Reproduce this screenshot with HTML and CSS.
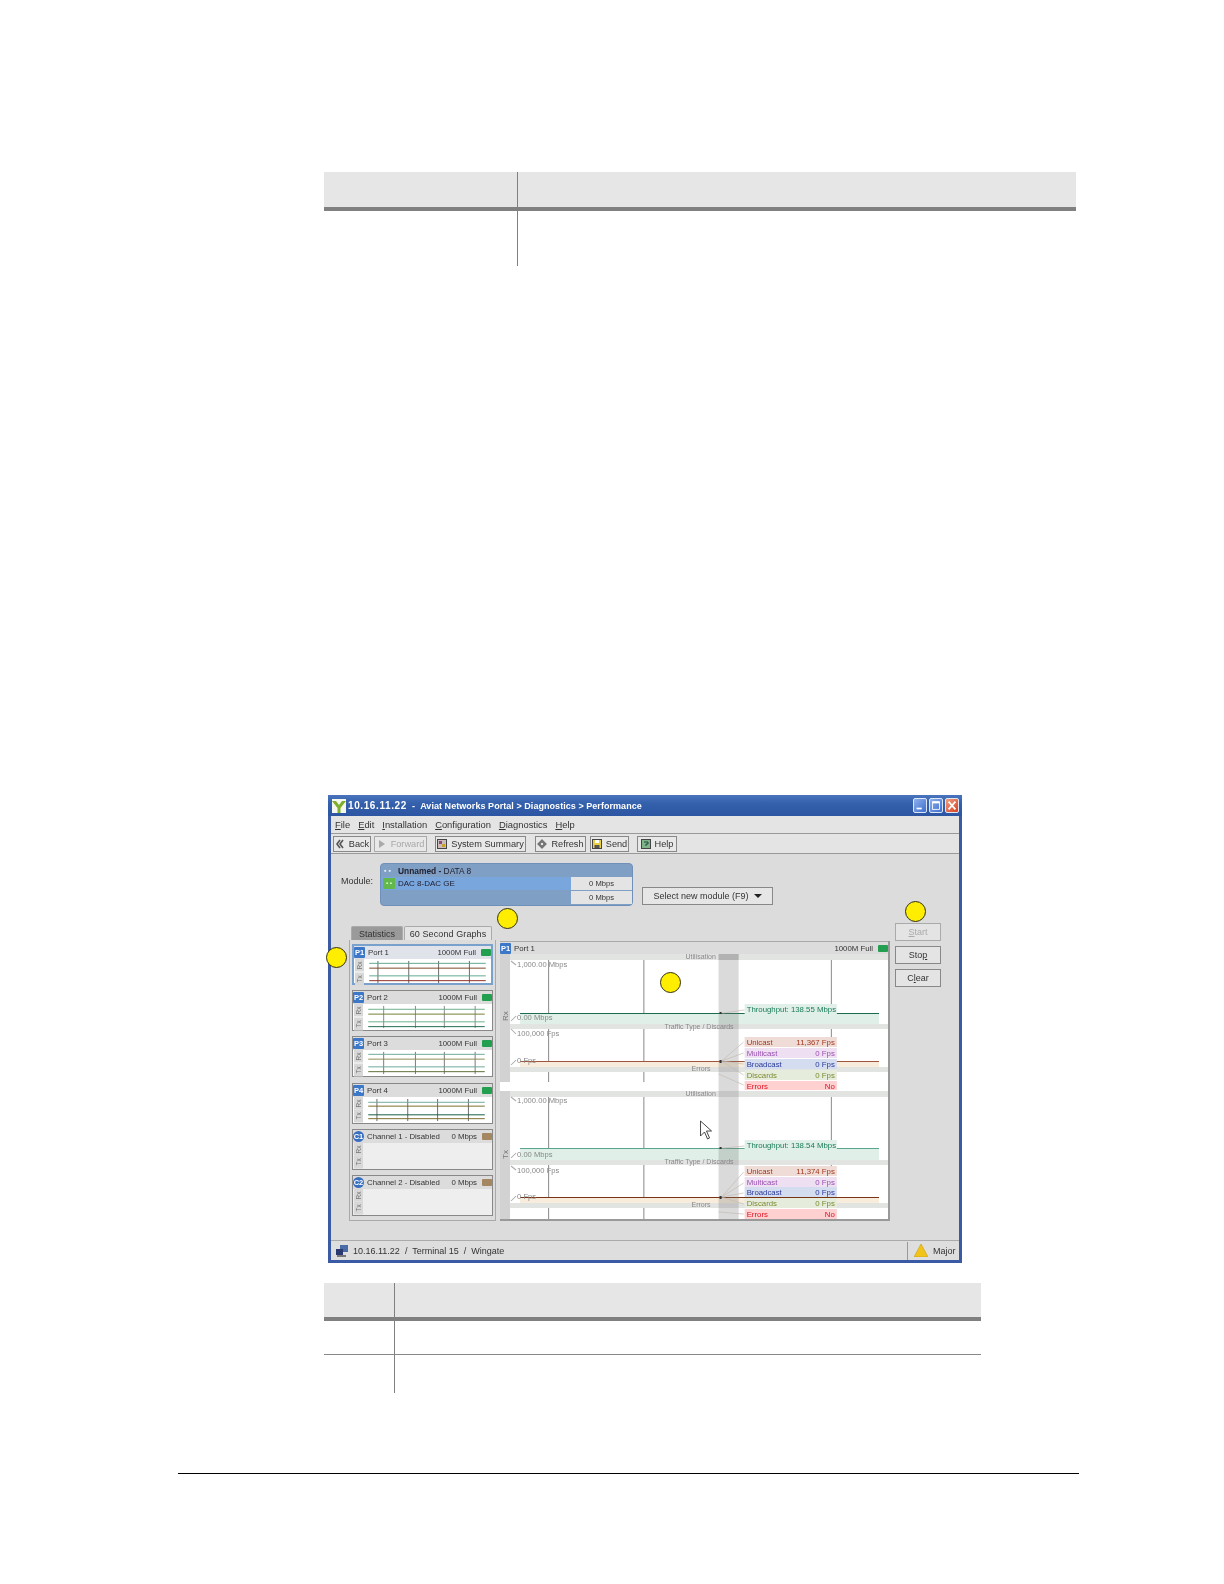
FILE: index.html
```html
<!DOCTYPE html>
<html lang="en">
<head>
<meta charset="utf-8">
<title>Performance</title>
<link rel="stylesheet" href="styles.css">
</head>
<body>
<main class="page">
  <table class="doc-table top-table">
    <thead><tr><th class="c1"></th><th></th></tr></thead>
    <tbody><tr class="r57"><td></td><td></td></tr></tbody>
  </table>

  <div class="shot">
    <div class="window">
      <header class="titlebar">
        <svg class="app-icon" viewBox="0 0 14 14"><rect width="14" height="14" fill="#f4f8ee"/><path d="M0 2 L4 2 L7 6 L10 2 L14 2 L8.5 9 L8.5 14 L5.500 14 L5.500 9 Z" fill="#7fb02c"/></svg>
        <span class="title-text"><span class="ip">10.16.11.22</span>&nbsp; - &nbsp;Aviat Networks Portal &gt; Diagnostics &gt; Performance</span>
        <span class="win-btns">
          <span class="wb"><svg viewBox="0 0 14 15"><rect x="3" y="10" width="6" height="2" fill="#fff"/></svg></span>
          <span class="wb"><svg viewBox="0 0 14 15"><rect x="3" y="3" width="8" height="9" fill="none" stroke="#fff" stroke-width="1"/><rect x="3" y="3" width="8" height="2" fill="#fff"/></svg></span>
          <span class="wb close"><svg viewBox="0 0 14 15"><path d="M3 3 L11 12 M11 3 L3 12" stroke="#fff" stroke-width="2"/></svg></span>
        </span>
      </header>
      <nav class="menubar">
        <span><u>F</u>ile</span><span><u>E</u>dit</span><span><u>I</u>nstallation</span><span><u>C</u>onfiguration</span><span><u>D</u>iagnostics</span><span><u>H</u>elp</span>
      </nav>
      <div class="toolbar">
        <span class="tb w-back"><svg class="ti" viewBox="0 0 10 10"><path d="M5 1 L2 5 L5 9 M8 1 L5 5 L8 9" fill="none" stroke="#555" stroke-width="1.6"/></svg>Back</span>
        <span class="tb w-fwd off"><svg class="ti" viewBox="0 0 10 10"><path d="M2 1 L8 5 L2 9 Z" fill="#aaa"/></svg>Forward</span>
        <span class="tb w-sys"><svg class="ti" viewBox="0 0 10 10"><rect x=".5" y=".5" width="9" height="9" fill="#cbb" stroke="#444"/><rect x="2" y="2" width="3" height="3" fill="#8a4a7a"/><rect x="5" y="5" width="3" height="3" fill="#c9a030"/></svg>System Summary</span>
        <span class="tb w-ref"><svg class="ti" viewBox="0 0 10 10"><path d="M5 .5 L9.500 5 L5 9.500 L.5 5 Z M5 3 L7 5 L5 7 L3 5 Z" fill="#777" fill-rule="evenodd" stroke="#444" stroke-width=".5"/></svg>Refresh</span>
        <span class="tb w-send"><svg class="ti" viewBox="0 0 10 10"><rect x=".5" y=".5" width="9" height="9" fill="#e8d040" stroke="#444"/><rect x="3" y="1" width="4" height="3" fill="#fff"/><rect x="2.500" y="6" width="5" height="3" fill="#555"/></svg>Send</span>
        <span class="tb w-help"><svg class="ti" viewBox="0 0 10 10"><rect x=".5" y=".5" width="9" height="9" fill="#7fb488" stroke="#444"/><path d="M3 3 L7 3 L7 5 L5 5 L5 7" fill="none" stroke="#244" stroke-width="1"/></svg>Help</span>
      </div>

      <section class="content">
        <div class="module-row">
          <span class="module-label">Module:</span>
          <div class="module-panel">
            <div class="module-head"><span class="dots">▪ ▪</span><b>Unnamed -</b>&nbsp;DATA 8</div>
            <div class="module-grid">
              <div class="module-sel"><span class="green-chip">▪ ▪</span>DAC 8-DAC GE</div>
              <div class="module-vals"><span>0 Mbps</span><span>0 Mbps</span></div>
            </div>
          </div>
          <span class="select-btn">Select new module (F9)<i class="caret"></i></span>
        </div>

        <div class="workspace">
          <div class="left-col">
            <div class="tabs"><span class="tab dark">Statistics</span><span class="tab">60 Second Graphs</span></div>
            <div class="port-panel">
              <article class="card sel">
                <div class="card-head"><span class="badge">P1</span><span class="name">Port 1</span><span class="speed">1000M Full</span><i class="led"></i></div>
                <div class="card-body"><div class="rxtx"><span>Rx</span><span>Tx</span></div>
                  <svg class="mini" viewBox="0 0 122 27"><path d="M9 2V25M41 2V25M72 2V25M104 2V25" stroke="#666"/><path d="M0 4.500H121M0 17.500H121" stroke="#5da58e"/><path d="M0 9.500H121" stroke="#7a4420"/><path d="M0 22.500H121" stroke="#902a20"/></svg></div>
              </article>
              <article class="card">
                <div class="card-head"><span class="badge">P2</span><span class="name">Port 2</span><span class="speed">1000M Full</span><i class="led"></i></div>
                <div class="card-body"><div class="rxtx"><span>Rx</span><span>Tx</span></div>
                  <svg class="mini" viewBox="0 0 122 27"><path d="M16 2V25M49 2V25M79 2V25M111 2V25" stroke="#888"/><path d="M0 5.500H121M0 18.500H121" stroke="#6ab08a"/><path d="M0 10.500H121" stroke="#6f7a30"/><path d="M0 23.500H121" stroke="#1d6a4a"/></svg></div>
              </article>
              <article class="card">
                <div class="card-head"><span class="badge">P3</span><span class="name">Port 3</span><span class="speed">1000M Full</span><i class="led"></i></div>
                <div class="card-body"><div class="rxtx"><span>Rx</span><span>Tx</span></div>
                  <svg class="mini" viewBox="0 0 122 27"><path d="M16 2V25M49 2V25M79 2V25M111 2V25" stroke="#777"/><path d="M0 4.500H121M0 17.500H121" stroke="#6aa898"/><path d="M0 9.500H121" stroke="#8a8a50"/><path d="M0 22.500H121" stroke="#5a6a30"/></svg></div>
              </article>
              <article class="card">
                <div class="card-head"><span class="badge">P4</span><span class="name">Port 4</span><span class="speed">1000M Full</span><i class="led"></i></div>
                <div class="card-body"><div class="rxtx"><span>Rx</span><span>Tx</span></div>
                  <svg class="mini" viewBox="0 0 122 27"><path d="M9 2V25M41 2V25M72 2V25M104 2V25" stroke="#666"/><path d="M0 5.500H121" stroke="#6aa898"/><path d="M0 9.500H121" stroke="#7a6a28"/><path d="M0 18.500H121" stroke="#0f5a3a"/><path d="M0 22.500H121" stroke="#7a6a28"/></svg></div>
              </article>
              <article class="card idle">
                <div class="card-head"><span class="badge round">C1</span><span class="name">Channel 1 - Disabled</span><span class="speed">0 Mbps</span><i class="led brown"></i></div>
                <div class="card-body"><div class="rxtx"><span>Rx</span><span>Tx</span></div></div>
              </article>
              <article class="card idle">
                <div class="card-head"><span class="badge round">C2</span><span class="name">Channel 2 - Disabled</span><span class="speed">0 Mbps</span><i class="led brown"></i></div>
                <div class="card-body"><div class="rxtx"><span>Rx</span><span>Tx</span></div></div>
              </article>
            </div>
          </div>

          <div class="graph-panel">
            <div class="graph-head"><span class="badge">P1</span><span class="name">Port 1</span><span class="speed">1000M Full</span><i class="led"></i></div>
            <svg class="plot" viewBox="0 0 387 265" preserveAspectRatio="none">
              <rect width="387" height="265" fill="#fff"/>
              <rect y="0" width="10" height="128" fill="#d2d2d2"/>
              <rect y="137" width="10" height="128" fill="#d2d2d2"/>
              <g fill="#e2e4e2">
                <rect x="10" y="0" width="377" height="6"/><rect x="10" y="70" width="377" height="5"/><rect x="10" y="113" width="377" height="5"/>
                <rect x="10" y="137" width="377" height="6"/><rect x="10" y="206" width="377" height="5"/><rect x="10" y="249" width="377" height="5"/>
              </g>
              <g stroke="#8a8a8a" stroke-width="1">
                <path d="M48.500 6V70M143.500 6V70M330.500 6V50M48.500 75V113M143.500 75V113M330.500 75V84M48.500 118V128M143.500 118V128"/>
                <path d="M48.500 143V206M143.500 143V206M330.500 143V190M48.500 211V249M143.500 211V249M330.500 211V213M48.500 254V265M143.500 254V265"/>
              </g>
              <rect x="20" y="59" width="358" height="11" fill="#e0f0e8"/>
              <path d="M20 59.500H378" stroke="#1b6b4c"/>
              <rect x="20" y="194" width="358" height="12" fill="#e0f0e8"/>
              <path d="M20 194.500H378" stroke="#5aa58e"/>
              <rect x="20" y="108" width="358" height="5" fill="#f8ecdc"/>
              <path d="M20 107.500H378" stroke="#a0563a"/>
              <rect x="20" y="244" width="358" height="5" fill="#f8ecdc"/>
              <path d="M20 243.500H378" stroke="#7a3310"/>
              <rect x="218" y="0" width="20" height="265" fill="#777" opacity=".27"/>
              <rect x="218" y="0" width="20" height="6" fill="#777" opacity=".25"/>

              <g fill="none" stroke="#c4bcb4" stroke-width=".7">
                <path d="M222 59L244 56M222 194L244 192"/>
                <path d="M221 107L243 88M221 107L243 99M221 107L243 110M221 107L243 121M218 120L243 131"/>
                <path d="M221 243L243 218M221 243L243 229M221 243L243 239M221 243L243 250M218 258L243 260"/>
              </g>
              <g fill="#333"><rect x="219" y="58" width="2" height="2"/><rect x="219" y="193" width="2" height="2"/><rect x="219" y="106" width="2" height="3"/><rect x="219" y="242" width="2" height="3"/></g>

              <g class="axis">
                <text x="185" y="5" class="band">Utilisation</text>
                <text x="164" y="75" class="band">Traffic Type / Discards</text>
                <text x="191" y="117.500" class="band">Errors</text>
                <text x="185" y="142" class="band">Utilisation</text>
                <text x="164" y="210.500" class="band">Traffic Type / Discards</text>
                <text x="191" y="253.500" class="band">Errors</text>
                <path d="M11 7L16 11M11 75L16 80M11 67L16 62M11 111L16 106M11 143L16 147M11 212L16 216M11 204L16 199M11 247L16 242" stroke="#aaa" fill="none"/>
                <text x="17" y="13">1,000.00 Mbps</text>
                <text x="17" y="66">0.00 Mbps</text>
                <text x="17" y="82">100,000 Fps</text>
                <text x="17" y="109">0 Fps</text>
                <text x="17" y="149">1,000.00 Mbps</text>
                <text x="17" y="203">0.00 Mbps</text>
                <text x="17" y="219">100,000 Fps</text>
                <text x="17" y="245">0 Fps</text>
              </g>
              <text class="vert" transform="translate(8 67) rotate(-90)">Rx</text>
              <text class="vert" transform="translate(8 205) rotate(-90)">Tx</text>

              <g class="legend">
                <rect x="244" y="50" width="92" height="10" fill="#e0f0e8"/><text x="246" y="58" fill="#1a7a5a">Throughput: 138.55 Mbps</text>
                <rect x="244" y="83" width="92" height="10" fill="#f0dcd6"/><text x="246" y="91" fill="#a03a20">Unicast</text><text x="334" y="91" class="r" fill="#a03a20">11,367 Fps</text>
                <rect x="244" y="94" width="92" height="10" fill="#eee0f2"/><text x="246" y="102" fill="#9a50b0">Multicast</text><text x="334" y="102" class="r" fill="#9a50b0">0 Fps</text>
                <rect x="244" y="105" width="92" height="10" fill="#d4dcf0"/><text x="246" y="113" fill="#2a3a9a">Broadcast</text><text x="334" y="113" class="r" fill="#2a3a9a">0 Fps</text>
                <rect x="244" y="116" width="92" height="10" fill="#e6ecdc"/><text x="246" y="124" fill="#7a8a30">Discards</text><text x="334" y="124" class="r" fill="#7a8a30">0 Fps</text>
                <rect x="244" y="127" width="92" height="9" fill="#ffd0d0"/><text x="246" y="135" fill="#e01020">Errors</text><text x="334" y="135" class="r" fill="#e01020">No</text>

                <rect x="244" y="186" width="92" height="10" fill="#e0f0e8"/><text x="246" y="194" fill="#1a7a5a">Throughput: 138.54 Mbps</text>
                <rect x="244" y="212" width="92" height="10" fill="#f0dcd6"/><text x="246" y="220" fill="#a03a20">Unicast</text><text x="334" y="220" class="r" fill="#a03a20">11,374 Fps</text>
                <rect x="244" y="223" width="92" height="10" fill="#eee0f2"/><text x="246" y="231" fill="#9a50b0">Multicast</text><text x="334" y="231" class="r" fill="#9a50b0">0 Fps</text>
                <rect x="244" y="233" width="92" height="10" fill="#d4dcf0"/><text x="246" y="241" fill="#2a3a9a">Broadcast</text><text x="334" y="241" class="r" fill="#2a3a9a">0 Fps</text>
                <rect x="244" y="244" width="92" height="10" fill="#e6ecdc"/><text x="246" y="252" fill="#7a8a30">Discards</text><text x="334" y="252" class="r" fill="#7a8a30">0 Fps</text>
                <rect x="244" y="255" width="92" height="10" fill="#ffd0d0"/><text x="246" y="263" fill="#e01020">Errors</text><text x="334" y="263" class="r" fill="#e01020">No</text>
              </g>
              <path d="M200 167 L200 182 L204 178 L207 185 L209 184 L206 177 L211 177 Z" fill="#fff" stroke="#333" stroke-width=".9"/>
            </svg>
          </div>

          <div class="actions">
            <span class="act off"><u>S</u>tart</span>
            <span class="act">Sto<u>p</u></span>
            <span class="act">C<u>l</u>ear</span>
          </div>
        </div>
      </section>

      <footer class="statusbar">
        <svg class="net" viewBox="0 0 12 12"><rect x="4" y="0" width="8" height="7" fill="#4a6aa8"/><rect x="0" y="4" width="7" height="6" fill="#2a3a70"/><rect x="1" y="10" width="9" height="2" fill="#777"/></svg>
        <span class="status-text">10.16.11.22 &nbsp;/&nbsp; Terminal 15 &nbsp;/&nbsp; Wingate</span>
        <span class="alarm"><svg class="tri" viewBox="0 0 14 13"><path d="M7 0 L14 13 L0 13 Z" fill="#f2c418" stroke="#c89a10" stroke-width=".6"/></svg>Major</span>
      </footer>
    </div>
    <i class="callout c-a"></i>
    <i class="callout c-b"></i>
    <i class="callout c-c"></i>
    <i class="callout c-d"></i>
  </div>

  <table class="doc-table bottom-table">
    <thead><tr><th class="c1"></th><th></th></tr></thead>
    <tbody><tr class="r35 ruled"><td></td><td></td></tr><tr class="r39"><td></td><td></td></tr></tbody>
  </table>

  <hr class="foot-rule">
</main>
</body>
</html>
```

FILE: styles.css
```css
* { box-sizing: border-box; }
html, body { margin: 0; padding: 0; background: #fff; }
body { font-family: "Liberation Sans", Arial, sans-serif; color: #333; }
.page { padding-top: 172px; width: 1224px; height: 1584px; overflow: hidden; }

.doc-table { border-collapse: collapse; table-layout: fixed; margin-left: 324px; }
.doc-table th { height: 37px; background: #e6e6e6; border-bottom: 4px solid #808080; padding: 0; }
.doc-table th + th, .doc-table td + td { border-left: 1px solid #808080; }
.doc-table td { padding: 0; }
.top-table { width: 752px; }
.top-table .c1 { width: 193px; }
.r57 td { height: 57px; }
.bottom-table { width: 657px; margin-top: 20px; }
.bottom-table th { height: 36px; }
.bottom-table .c1 { width: 70px; }
.r35 td { height: 35px; }
.r39 td { height: 39px; }
.ruled td { border-bottom: 1px solid #888; }

.shot { position: relative; width: 634px; height: 468px; margin: 529px 0 0 328px; }
.window { width: 634px; height: 468px; display: flex; flex-direction: column; background: #dcdcdc; border: 3px solid #3a5aa6; border-top: 0; filter: blur(.45px); font-size: 9px; }

.titlebar { height: 21px; margin: 0 -3px; padding: 3px 3px 3px 4px; display: flex; align-items: center; background: linear-gradient(#4a74bd, #3460ac 40%, #2c55a2); color: #fff; flex: none; }
.app-icon { width: 14px; height: 14px; margin-right: 2px; flex: none; }
.title-text { font-weight: 700; font-size: 9px; letter-spacing: .05px; white-space: nowrap; }
.ip { font-size: 10px; letter-spacing: .6px; }
.win-btns { margin-left: auto; display: flex; gap: 2px; }
.wb { width: 14px; height: 15px; display: block; background: linear-gradient(135deg, #8fb0ea, #3d6fd0); border: 1px solid #dde6f5; border-radius: 2px; }
.wb svg { display: block; width: 100%; height: 100%; }
.wb.close { background: linear-gradient(135deg, #f0a080, #d84020); }

.menubar { height: 18px; flex: none; display: flex; align-items: center; gap: 8px; padding-left: 4px; border-bottom: 1px solid #999; background: #e4e4e4; font-size: 9.400px; }

.toolbar { height: 20px; flex: none; display: flex; align-items: center; padding-left: 2px; border-bottom: 1px solid #999; background: #e4e4e4; font-size: 9.200px; }
.tb { height: 16px; display: flex; align-items: center; justify-content: center; gap: 4px; border: 1px solid #888; background: #e8e8e8; white-space: nowrap; }
.tb.off { color: #a8a8a8; border-color: #aaa; }
.ti { width: 10px; height: 10px; flex: none; }
.w-back { width: 38px; }
.w-fwd { width: 53px; margin-left: 3px; }
.w-sys { width: 91px; margin-left: 8px; }
.w-ref { width: 51px; margin-left: 9px; }
.w-send { width: 39px; margin-left: 4px; }
.w-help { width: 40px; margin-left: 8px; }

.content { flex: 1; min-height: 0; display: flex; flex-direction: column; padding-top: 9px; background: #dcdcdc; }
.module-row { height: 43px; display: flex; padding-left: 10px; flex: none; }
.module-label { width: 39px; padding-top: 13px; font-size: 9px; }
.module-panel { width: 253px; height: 43px; background: #7f9fc4; border: 1px solid #6f90b8; border-radius: 4px; }
.module-head { height: 13px; display: flex; align-items: center; padding-left: 3px; font-size: 8.400px; color: #223; }
.dots { color: #e8f0f8; font-size: 7px; width: 14px; }
.module-grid { display: grid; grid-template-columns: 189px 61px; padding-left: 1px; }
.module-sel { height: 13px; background: #79a6dc; display: flex; align-items: center; font-size: 8px; color: #223; }
.green-chip { width: 12px; height: 11px; margin: 0 3px 0 1px; background: #62b84a; color: #e8f8e0; font-size: 6px; text-align: center; line-height: 11px; }
.module-vals { display: flex; flex-direction: column; gap: 1px; }
.module-vals span { height: 13px; background: #e4e4e4; text-align: center; font-size: 7.600px; line-height: 13px; }
.select-btn { width: 131px; height: 18px; margin: 24px 0 0 9px; display: flex; align-items: center; justify-content: center; gap: 5px; background: #e6e6e6; border: 1px solid #888; font-size: 9px; white-space: nowrap; }
.caret { width: 0; height: 0; border: 4px solid transparent; border-top: 4px solid #222; border-bottom: 0; }

.workspace { display: flex; margin-top: 17px; padding-left: 18px; }
.left-col { width: 147px; padding-top: 3px; flex: none; }
.tabs { display: flex; height: 14px; padding-left: 2px; gap: 1px; }
.tab { display: flex; align-items: center; justify-content: center; width: 88px; background: #e4e4e4; border: 1px solid #aaa; border-bottom: 0; font-size: 9px; letter-spacing: .1px; white-space: nowrap; border-radius: 2px 2px 0 0; }
.tab.dark { width: 52px; background: #9a9a9a; letter-spacing: 0; }
.port-panel { height: 281px; display: flex; flex-direction: column; gap: 5.200px; padding: 4px 3px 0 2px; border: 1px solid #aaa; border-top: 0; background: #dcdcdc; }
.card { width: 141px; height: 41px; flex: none; background: #fff; border: 1px solid #888; }
.card.sel { border: 2px solid #7aa0cc; }
.card.idle { background: #eee; }
.card-head, .graph-head { display: flex; align-items: center; height: 13px; background: #dcdcdc; font-size: 7.800px; white-space: nowrap; }
.card.sel .card-head { background: #e0e4ea; }
.badge { width: 11px; height: 11px; margin-right: 3px; flex: none; background: #3d78c8; color: #fff; font-size: 7.500px; font-weight: 700; line-height: 11px; text-align: center; border-radius: 1px; }
.badge.round { border-radius: 50%; background: #3a6fc0; }
.speed { margin-left: auto; }
.led { width: 10px; height: 7px; margin-left: 5px; flex: none; background: #22a050; border-radius: 1px; }
.led.brown { background: #a48660; }
.card-body { display: flex; height: 26px; }
.rxtx { width: 9px; flex: none; display: flex; flex-direction: column; gap: 1px; margin-left: 1px; }
.rxtx span { flex: 1; background: #d8d8d8; color: #777; font-size: 6.500px; line-height: 9px; writing-mode: vertical-rl; transform: rotate(180deg); text-align: center; }
.mini { width: 124px; height: 26px; margin-left: 2px; flex: none; }

.graph-panel { width: 390px; height: 280px; margin: 18px 0 0 4px; flex: none; border-right: 2px solid #999; border-bottom: 2px solid #999; background: #dcdcdc; }
.graph-head { border-top: 1px solid #aaa; }
.plot { display: block; width: 388px; height: 265px; }
.plot text { font-family: "Liberation Sans", Arial, sans-serif; }
.axis text { font-size: 7.600px; fill: #888; }
.axis .band { font-size: 7px; fill: #888; }
.vert { font-size: 8px; fill: #777; }
.legend text { font-size: 7.800px; }
.legend .r { text-anchor: end; }

.actions { display: flex; flex-direction: column; gap: 5px; margin-left: 5px; }
.act { width: 46px; height: 18px; display: flex; align-items: center; justify-content: center; background: #e4e4e4; border: 1px solid #888; font-size: 9px; }
.act.off { color: #aaa; border-color: #aaa; }

.statusbar { height: 20px; flex: none; display: flex; align-items: center; padding-left: 5px; background: #dedede; border-top: 1px solid #aaa; font-size: 9px; }
.net { width: 12px; height: 12px; margin-right: 5px; }
.alarm { margin-left: auto; height: 18px; display: flex; align-items: center; gap: 5px; width: 52px; padding-left: 6px; border-left: 1px solid #999; }
.tri { width: 14px; height: 13px; }

.callout { position: absolute; width: 21px; height: 21px; border-radius: 50%; background: #ffee00; border: 1px solid #332f10; }
.c-a { left: 168.500px; top: 113px; }
.c-b { left: -2px; top: 152px; }
.c-c { left: 576.500px; top: 106px; }
.c-d { left: 331.500px; top: 177px; }

.foot-rule { width: 901px; height: 0; margin: 80px 0 0 178px; border: 0; border-top: 1.500px solid #000; }
```
